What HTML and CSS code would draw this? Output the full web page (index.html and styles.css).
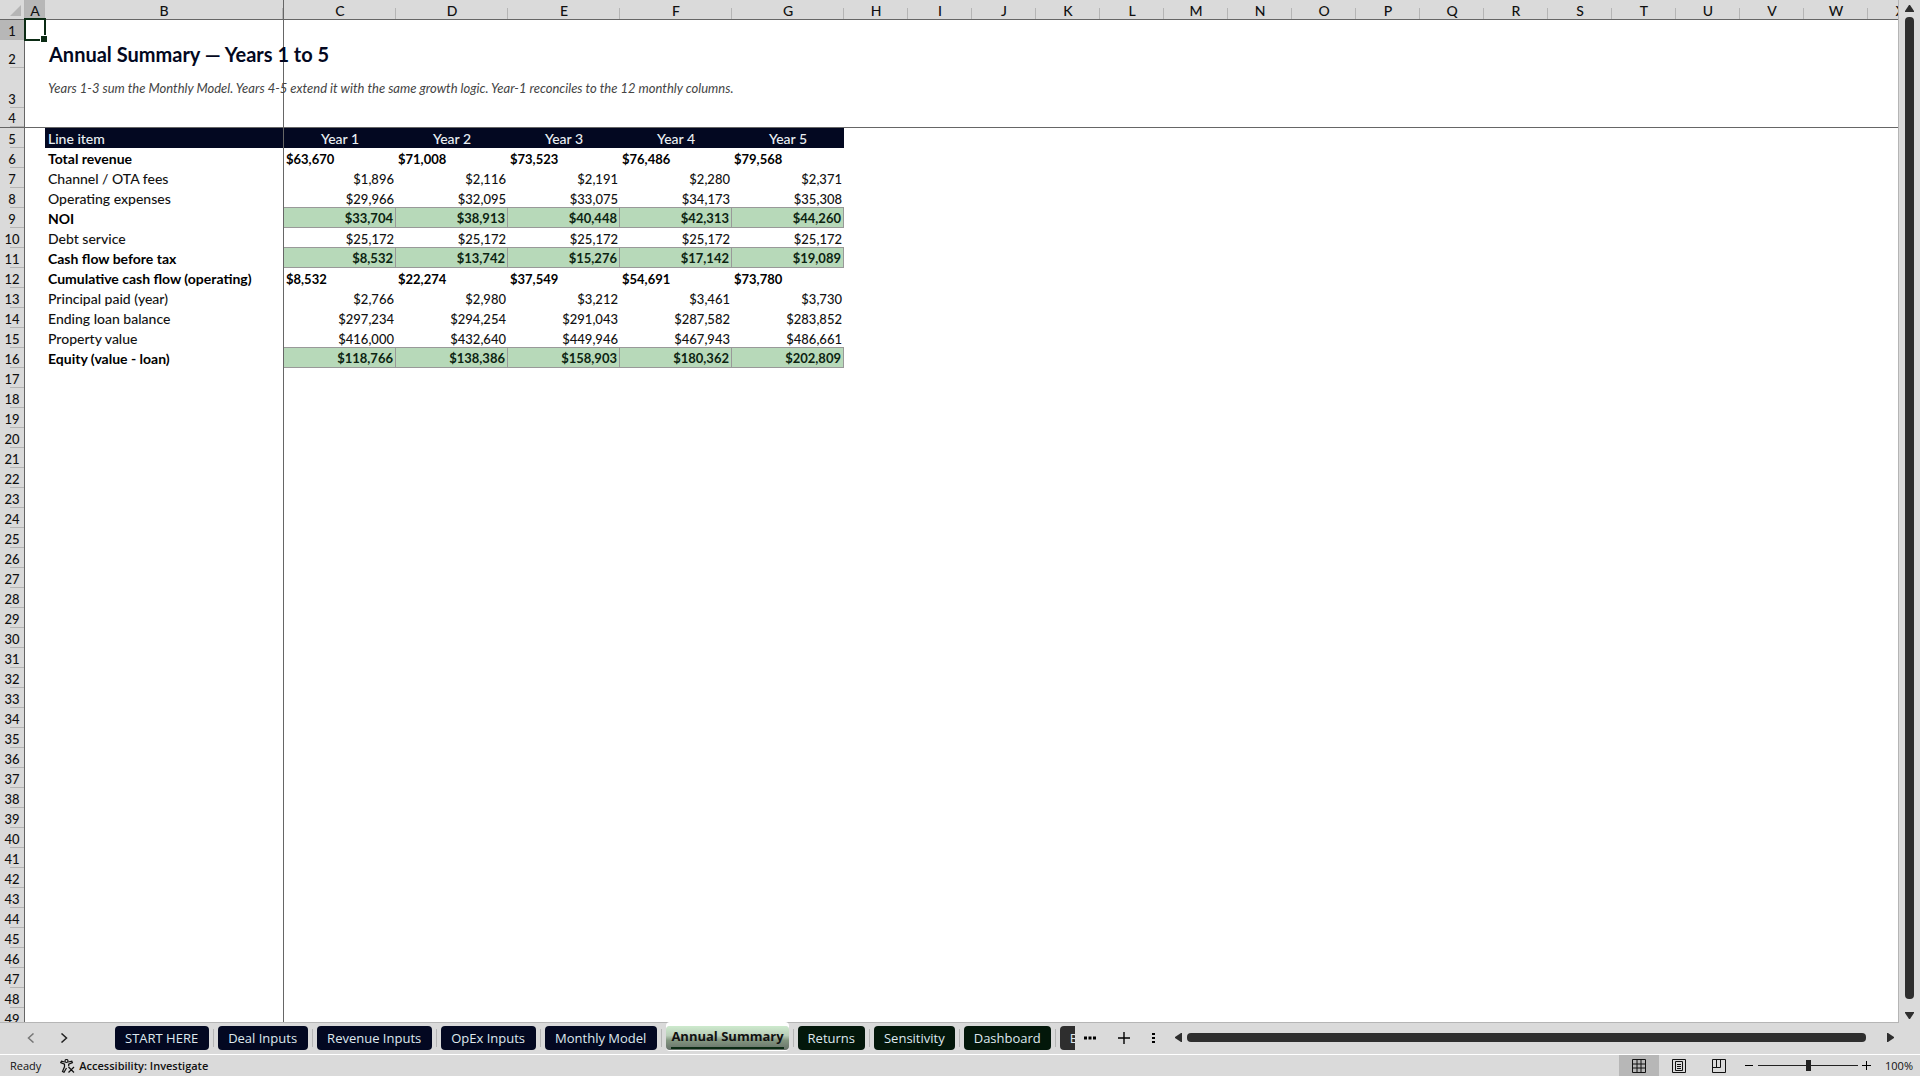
FILE: index.html
```html
<!DOCTYPE html>
<html lang="en">
<head>
    <meta charset="UTF-8">
    <meta name="viewport" content="width=device-width, initial-scale=1.0">
    <title>Annual Summary</title>
    <link rel="stylesheet" href="styles.css">
</head>
<body>
    <main class="workspace">
        <div class="sheet">
            <table class="grid">
                <colgroup>
                    <col class="col-num">
                    <col class="col-a">
                    <col class="col-b">
                    <col class="col-year" span="5">
                    <col class="col-std" span="19">
                </colgroup>
                <thead>
                    <tr class="letters">
                        <th class="corner"><svg width="11" height="11" viewBox="0 0 11 11"><path d="M11 0v11H0z" fill="#b5b5b5"/></svg></th>
                        <th class="selected">A</th>
                        <th class="freeze">B</th>
                        <th>C</th>
                        <th>D</th>
                        <th>E</th>
                        <th>F</th>
                        <th>G</th>
                    </tr>
                </thead>
                <tbody>
                    <tr>
                        <th class="selected">1</th>
                        <td class="active-cell"><span class="cursor"></span></td>
                        <td class="freeze"></td>
                        <td colspan="5"></td>
                    </tr>
                    <tr class="row-title">
                        <th>2</th>
                        <td></td>
                        <td class="freeze title">Annual Summary — Years 1 to 5</td>
                        <td colspan="5"></td>
                    </tr>
                    <tr class="row-note">
                        <th>3</th>
                        <td></td>
                        <td class="freeze note">Years 1-3 sum the Monthly Model. Years 4-5 extend it with the same growth logic. Year-1 reconciles to the 12 monthly columns.</td>
                        <td colspan="5"></td>
                    </tr>
                    <tr class="row-split">
                        <th>4</th>
                        <td></td>
                        <td class="freeze"></td>
                        <td colspan="5"></td>
                    </tr>
                    <tr class="head">
                        <th>5</th>
                        <td></td>
                        <td class="freeze">Line item</td>
                        <td>Year 1</td>
                        <td>Year 2</td>
                        <td>Year 3</td>
                        <td>Year 4</td>
                        <td>Year 5</td>
                    </tr>
                    <tr class="values bold">
                        <th>6</th>
                        <td></td>
                        <td class="freeze">Total revenue</td>
                        <td>$63,670</td>
                        <td>$71,008</td>
                        <td>$73,523</td>
                        <td>$76,486</td>
                        <td>$79,568</td>
                    </tr>
                    <tr class="values money">
                        <th>7</th>
                        <td></td>
                        <td class="freeze">Channel / OTA fees</td>
                        <td>$1,896</td>
                        <td>$2,116</td>
                        <td>$2,191</td>
                        <td>$2,280</td>
                        <td>$2,371</td>
                    </tr>
                    <tr class="values money">
                        <th>8</th>
                        <td></td>
                        <td class="freeze">Operating expenses</td>
                        <td>$29,966</td>
                        <td>$32,095</td>
                        <td>$33,075</td>
                        <td>$34,173</td>
                        <td>$35,308</td>
                    </tr>
                    <tr class="values money bold total">
                        <th>9</th>
                        <td></td>
                        <td class="freeze">NOI</td>
                        <td>$33,704</td>
                        <td>$38,913</td>
                        <td>$40,448</td>
                        <td>$42,313</td>
                        <td>$44,260</td>
                    </tr>
                    <tr class="values money">
                        <th>10</th>
                        <td></td>
                        <td class="freeze">Debt service</td>
                        <td>$25,172</td>
                        <td>$25,172</td>
                        <td>$25,172</td>
                        <td>$25,172</td>
                        <td>$25,172</td>
                    </tr>
                    <tr class="values money bold total">
                        <th>11</th>
                        <td></td>
                        <td class="freeze">Cash flow before tax</td>
                        <td>$8,532</td>
                        <td>$13,742</td>
                        <td>$15,276</td>
                        <td>$17,142</td>
                        <td>$19,089</td>
                    </tr>
                    <tr class="values bold">
                        <th>12</th>
                        <td></td>
                        <td class="freeze">Cumulative cash flow (operating)</td>
                        <td>$8,532</td>
                        <td>$22,274</td>
                        <td>$37,549</td>
                        <td>$54,691</td>
                        <td>$73,780</td>
                    </tr>
                    <tr class="values money">
                        <th>13</th>
                        <td></td>
                        <td class="freeze">Principal paid (year)</td>
                        <td>$2,766</td>
                        <td>$2,980</td>
                        <td>$3,212</td>
                        <td>$3,461</td>
                        <td>$3,730</td>
                    </tr>
                    <tr class="values money">
                        <th>14</th>
                        <td></td>
                        <td class="freeze">Ending loan balance</td>
                        <td>$297,234</td>
                        <td>$294,254</td>
                        <td>$291,043</td>
                        <td>$287,582</td>
                        <td>$283,852</td>
                    </tr>
                    <tr class="values money">
                        <th>15</th>
                        <td></td>
                        <td class="freeze">Property value</td>
                        <td>$416,000</td>
                        <td>$432,640</td>
                        <td>$449,946</td>
                        <td>$467,943</td>
                        <td>$486,661</td>
                    </tr>
                    <tr class="values money bold total">
                        <th>16</th>
                        <td></td>
                        <td class="freeze">Equity (value - loan)</td>
                        <td>$118,766</td>
                        <td>$138,386</td>
                        <td>$158,903</td>
                        <td>$180,362</td>
                        <td>$202,809</td>
                    </tr>
                </tbody>
            </table>
        </div>
        <div class="vscroll">
            <button type="button" class="arrow" aria-label="Scroll up"><svg width="9" height="7" viewBox="0 0 9 7"><path d="M4 0h1l4 6v1H0V6z"/></svg></button>
            <div class="thumb"></div>
            <button type="button" class="arrow" aria-label="Scroll down"><svg width="9" height="7" viewBox="0 0 9 7"><path d="M4 7h1l4-6V0H0v1z"/></svg></button>
        </div>
    </main>

    <div class="tabbar">
        <div class="tab-nav">
            <button type="button" class="dim" aria-label="Previous sheet"><svg width="8" height="10" viewBox="0 0 8 10"><path d="M6.500.5 1.500 5l5 4.500"/></svg></button>
            <button type="button" aria-label="Next sheet"><svg width="8" height="10" viewBox="0 0 8 10"><path d="M1.500.5 6.500 5l-5 4.500"/></svg></button>
        </div>
        <nav class="tabs">
            <button type="button" class="tab navy">START HERE</button>
            <button type="button" class="tab navy">Deal Inputs</button>
            <button type="button" class="tab navy">Revenue Inputs</button>
            <button type="button" class="tab navy">OpEx Inputs</button>
            <button type="button" class="tab navy">Monthly Model</button>
            <button type="button" class="tab active"><span>Annual Summary</span></button>
            <button type="button" class="tab green">Returns</button>
            <button type="button" class="tab green">Sensitivity</button>
            <button type="button" class="tab green">Dashboard</button>
            <button type="button" class="tab gray">Be</button>
        </nav>
        <div class="tab-tools">
            <button type="button" aria-label="More sheets"><svg width="12" height="12" viewBox="0 0 12 12"><path d="M0 4.500h3v3H0zM4.500 4.500h3v3h-3zM9 4.500h3v3H9z"/></svg></button>
            <button type="button" aria-label="New sheet"><svg width="12" height="12" viewBox="0 0 12 12"><path d="M5.300 0h1.400v5.300H12v1.400H6.700V12H5.300V6.700H0V5.300h5.300z"/></svg></button>
            <button type="button" aria-label="Resize tabs"><svg width="3" height="12" viewBox="0 0 3 12"><path d="M0 1h3v2H0zM0 5h3v2H0zM0 9h3v2H0z"/></svg></button>
        </div>
        <div class="hscroll">
            <button type="button" class="arrow" aria-label="Scroll left"><svg width="7" height="9" viewBox="0 0 7 9"><path d="M0 4v1l6 4h1V0H6z"/></svg></button>
            <div class="thumb"></div>
            <button type="button" class="arrow" aria-label="Scroll right"><svg width="7" height="9" viewBox="0 0 7 9"><path d="M7 4v1L1 9H0V0h1z"/></svg></button>
        </div>
    </div>

    <footer class="statusbar">
        <span class="ready">Ready</span>
        <button type="button" class="access">
            <svg width="15" height="14" viewBox="0 0 15 14" fill="none" stroke="#111" stroke-width="1.200"><circle cx="6.500" cy="2" r="1.500"/><path d="M4.800 3 1.500 2.200.8 3.600l3.700 1.600v2.600L2.500 12.500l1.500.8L6.500 9M8.200 3l3.600-.8.600 1.400-3.700 1.600v2M8.500 8l5.500 5.500M14 8l-5.500 5.500"/></svg>
            <span>Accessibility: Investigate</span>
        </button>
        <div class="views">
            <button type="button" class="current" aria-label="Normal view"><svg width="14" height="14" viewBox="0 0 14 14"><path d="M.5.5h13v13H.5zM5 .5v13M9 .5v13M.5 5h13M.5 9h13"/></svg></button>
            <button type="button" aria-label="Page layout view"><svg width="14" height="14" viewBox="0 0 14 14"><path d="M.5.5h13v13H.5zM3.500 2.500h7v9h-7zM5 5.500h4M5 7.500h4M5 9.500h4"/></svg></button>
            <button type="button" aria-label="Page break preview"><svg width="14" height="14" viewBox="0 0 14 14"><path d="M.5.5h13v13H.5zM4.500.5v8M8.500.5v8M.5 8.500h8"/></svg></button>
        </div>
        <div class="zoom">
            <button type="button" aria-label="Zoom out"><svg width="9" height="9" viewBox="0 0 9 9"><path d="M0 4h8v1H0z"/></svg></button>
            <input type="range" min="0" max="100" value="50" aria-label="Zoom">
            <button type="button" aria-label="Zoom in"><svg width="9" height="9" viewBox="0 0 9 9"><path d="M4 0h1v4h4v1H5v4H4V5H0V4h4z"/></svg></button>
            <button type="button" class="level">100%</button>
        </div>
    </footer>

    <script>
        const sheet = document.querySelector(".sheet");
        const grid = document.querySelector(".grid");
        const tbody = grid.querySelector("tbody");

        // Column letters after G, as many as the window shows
        const letters = document.querySelector(".letters");
        for (const letter of "HIJKLMNOPQRSTUVWXYZ") {
            const last = letters.lastElementChild.getBoundingClientRect();
            if (last.right >= sheet.clientWidth) break;
            const th = document.createElement("th");
            th.textContent = letter;
            letters.appendChild(th);
        }

        // Empty rows down to the bottom of the window
        for (let n = 17; grid.offsetHeight < sheet.clientHeight; n++) {
            const tr = document.createElement("tr");
            tr.innerHTML = `<th>${n}</th><td></td><td class="freeze"></td><td colspan="5"></td>`;
            tbody.appendChild(tr);
        }

        // Fill each row out to the last column
        tbody.querySelectorAll("tr").forEach(tr => {
            const td = document.createElement("td");
            td.colSpan = 19;
            td.className = "rest";
            tr.appendChild(td);
        });
    </script>
</body>
</html>
```
FILE: styles.css
```css
* {
    margin: 0;
    padding: 0;
    box-sizing: border-box;
}

body {
    display: flex;
    flex-direction: column;
    height: 100vh;
    overflow: hidden;
    background: #dadada;
    color: #111;
    font-family: Lato, sans-serif;
    font-size: 14px;
}

button {
    border: none;
    background: none;
    color: inherit;
    font: inherit;
    cursor: pointer;
}

svg {
    display: block;
}

/* Sheet */
.workspace {
    flex: 1;
    min-height: 0;
    display: flex;
}

.sheet {
    flex: 1;
    min-width: 0;
    overflow: hidden;
    background: #fff;
    border-right: 1px solid #b5b5b5;
    border-bottom: 1px solid #b5b5b5;
}

.grid {
    width: 1px;
    table-layout: fixed;
    border-collapse: separate;
    border-spacing: 0;
    font-weight: 500;
    line-height: 18px;
}

.col-num {
    width: 25px;
}

.col-a {
    width: 20px;
}

.col-b {
    width: 239px;
}

.col-year {
    width: 112px;
}

.col-std {
    width: 64px;
}

.grid tr {
    height: 20px;
}

.grid th {
    font-size: 13px;
    font-weight: 500;
    background: #dadada linear-gradient(#b5b5b5, #b5b5b5) no-repeat right bottom;
    background-size: 14px 1px;
    border-right: 1px solid #666;
    vertical-align: bottom;
}

.grid .letters th {
    font-size: 14px;
    line-height: 17px;
    padding-top: 2px;
    background-size: 1px 11px;
    border-right: none;
    border-bottom: 1px solid #666;
}

.grid .letters .corner {
    background-size: 0 0;
    border-right: 1px solid #b5b5b5;
    padding: 0 3px 3px 10px;
}

.grid th.selected,
.grid .letters th.selected {
    background-color: #b7b7b7;
}

.grid td {
    padding: 1px 2px 0;
    white-space: nowrap;
}

.grid .freeze,
.grid .letters .freeze {
    border-right: 1px solid #666;
}

.grid td.freeze {
    padding-left: 3px;
}

.grid .row-title {
    height: 28px;
}

.grid .row-note {
    height: 40px;
}

.row-split th,
.row-split td {
    border-bottom: 1px solid #666;
}

.grid td.title {
    color: #030821;
    font-size: 20px;
    font-weight: 700;
    padding: 0 0 1px 4px;
}

.grid td.note {
    color: #444;
    font-size: 13px;
    font-style: italic;
    font-weight: 400;
    padding: 0 0 1px 3px;
}

.active-cell {
    position: relative;
}

.cursor {
    position: absolute;
    inset: -2px -1px -1px -1px;
    border: 2px solid #0b2b14;
}

.cursor::after {
    content: "";
    position: absolute;
    right: -3px;
    bottom: -3px;
    width: 6px;
    height: 6px;
    background: #0b2b14;
    border-top: 1px solid #fff;
    border-left: 1px solid #fff;
}

.head td:nth-child(n+3):not(.rest) {
    background: #030821;
    color: #eaf0f4;
}

.head td:nth-child(n+4) {
    text-align: center;
}

.values td:nth-child(n+4) {
    font-size: 13px;
}

.bold td {
    font-weight: 700;
    color: #000;
}

.money td:nth-child(n+4) {
    text-align: right;
}

.total td:nth-child(n+4):not(.rest) {
    background: #b7d9b9;
    color: #0c2411;
    border-right: 1px solid #999;
    border-bottom: 1px solid #999;
    box-shadow: 0 -1px 0 #999;
}

/* Scroll bars */
.vscroll {
    width: 21px;
    display: flex;
    flex-direction: column;
    align-items: center;
    gap: 5px;
    padding: 5px 1px 4px 0;
}

.vscroll .thumb {
    flex: 1;
    width: 9px;
    margin-bottom: 8px;
}

.thumb {
    background: #2e2e2e;
    border-radius: 4px;
}

.arrow {
    fill: #2e2e2e;
}

.hscroll {
    width: 39%;
    display: flex;
    align-items: center;
    gap: 5px;
    padding: 0 26px 2px 4px;
}

.hscroll .thumb {
    flex: 1;
    height: 9px;
    margin-right: 16px;
}

/* Sheet tabs */
.tabbar {
    height: 32px;
    display: flex;
    border-bottom: 1px solid #fff;
    font-family: "Open Sans", sans-serif;
    font-size: 13px;
}

.tab-nav {
    width: 110px;
    display: flex;
    align-items: center;
    gap: 25px;
    padding: 0 0 2px 27px;
}

.tab-nav svg {
    fill: none;
    stroke: #222;
    stroke-width: 1.5;
}

.tab-nav .dim svg {
    stroke: #777;
}

.tabs {
    flex: 1;
    min-width: 0;
    display: flex;
    gap: 9px;
    overflow: hidden;
    margin-top: -1px;
    padding: 4px 0 4px 5px;
}

.tab {
    position: relative;
    flex: none;
    height: 24px;
    padding: 0 10px;
    border-radius: 4px;
    line-height: 24px;
    white-space: nowrap;
    color: #dfe8ee;
}

.tab:not(:first-child)::before {
    content: "";
    position: absolute;
    left: -5px;
    top: 3px;
    width: 1px;
    height: 18px;
    background: #b5b5b5;
}

.navy {
    background: #030821;
    padding: 0 11px 0 10px;
}

.green {
    background: #03170a;
}

.gray {
    background: #2e2e2e;
}

.active {
    background: linear-gradient(#cdeacd, #b9cdb8 40%, #82957f 60%, #667069);
    box-shadow: 0 1px 0 #fff, 0 -4px 0 #fff;
    color: #111;
    font-weight: 700;
    padding: 0 5px;
}

.active span {
    display: block;
    height: 21px;
    line-height: 16px;
    border-bottom: 2px solid #0b2b14;
}

.tab-tools {
    display: flex;
    align-items: center;
    gap: 22px;
    padding: 0 16px 2px 9px;
}

/* Status bar */
.statusbar {
    height: 21px;
    display: flex;
    align-items: center;
    font-family: "Open Sans", sans-serif;
    font-size: 11px;
    padding: 0 7px 0 10px;
}

.access {
    display: flex;
    align-items: center;
    gap: 4px;
    margin-left: 19px;
    font-weight: 600;
}

.views {
    display: flex;
    align-self: stretch;
    margin-left: auto;
}

.views button {
    width: 40px;
    display: flex;
    align-items: center;
    justify-content: center;
}

.views svg {
    fill: none;
    stroke: #111;
}

.views .current {
    background: #b7b7b7;
}

.zoom {
    display: flex;
    align-items: center;
    gap: 4px;
    margin-left: 6px;
}

.zoom input {
    appearance: none;
    width: 100px;
    height: 12px;
    background: linear-gradient(#222, #222) no-repeat center / 100% 1px;
}

.zoom input::-webkit-slider-thumb {
    appearance: none;
    width: 5px;
    height: 11px;
    background: #222;
}

.level {
    margin-left: 10px;
}
```
